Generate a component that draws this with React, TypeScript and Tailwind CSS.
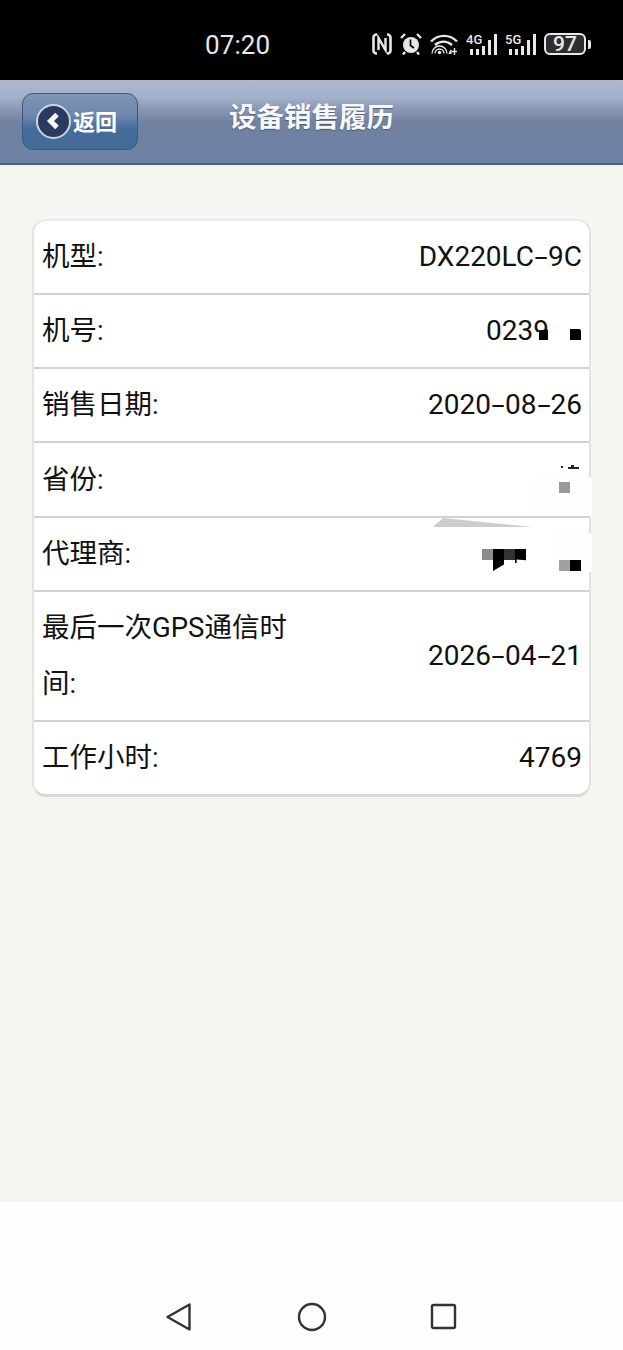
import React from 'react';

const rows = [
  { label: '机型:', value: 'DX220LC-9C', h: 'h-[72px]' },
  { label: '机号:', value: '0239', h: 'h-[72px]', cls: 'mr-[33px]' },
  { label: '销售日期:', value: '2020-08-26', h: 'h-[72px]' },
  { label: '省份:', value: '', h: 'h-[73px]' },
  { label: '代理商:', value: '', h: 'h-[72px]' },
  { label: '最后一次GPS通信时间:', value: '2026-04-21', h: 'h-[128px]', wrap: true },
  { label: '工作小时:', value: '4769', h: 'h-[72px]', last: true },
];

// the hyphens on the phone's font are much wider than Roboto's
const Value = ({ text }: { text: string }) => (
  <>
    {text.split(/(-)/).map((part, i) =>
      part === '-' ? (
        <span key={i} className="inline-block w-[14px] text-center scale-x-[1.7]">-</span>
      ) : (
        <span key={i}>{part}</span>
      ),
    )}
  </>
);

const Signal = ({ tag }: { tag: string }) => (
  <div className="relative w-[31px] h-[22px]">
    <span className="absolute left-0 top-[-1px] text-[13px] leading-[15px] font-medium text-[#e8e8e8]">{tag}</span>
    <div className="absolute right-0 bottom-0 flex items-end gap-[3px]">
      <div className="w-[3px] h-[6px] bg-[#e8e8e8]" />
      <div className="w-[3px] h-[6px] bg-[#e8e8e8]" />
      <div className="w-[3px] h-[9px] bg-[#e8e8e8]" />
      <div className="w-[3px] h-[15px] bg-[#e8e8e8]" />
      <div className="w-[3px] h-[21px] bg-[#e8e8e8]" />
    </div>
  </div>
);

const StatusBar = () => (
  <div className="h-[80px] bg-black flex items-center relative font-['Roboto',sans-serif] text-[#e8e8e8]">
    <span className="ml-[205px] mt-[10px] text-[26px] leading-none tracking-[0.1px]">07:20</span>
    <div className="absolute left-[372px] top-[33px] flex items-center gap-[8px]">
      {/* nfc */}
      <svg width="20" height="22" viewBox="0 0 20 22">
        <path d="M5 1.500H4.500A3 3 0 0 0 1.500 4.500v13a3 3 0 0 0 3 3H5M15 1.500h.5a3 3 0 0 1 3 3v13a3 3 0 0 1-3 3H15" fill="none" stroke="#e8e8e8" strokeWidth="2.600" />
        <path d="M6.500 17V5l7 12V5" fill="none" stroke="#e8e8e8" strokeWidth="2.400" />
      </svg>
      {/* alarm */}
      <svg width="22" height="22" viewBox="0 0 22 22">
        <circle cx="11" cy="12" r="8" fill="#e8e8e8" />
        <path d="M10.500 6.500v6l3.500 2.500" fill="none" stroke="#000" strokeWidth="1.700" />
        <path d="M1 5l4-4M21 5l-4-4M5 19l-2 2.500M17 19l2 2.500" stroke="#e8e8e8" strokeWidth="2.400" />
      </svg>
      {/* wifi */}
      <svg width="28" height="22" viewBox="0 0 28 22">
        <path d="M1 8.500C8 1 20 1 27 8.500" fill="none" stroke="#e8e8e8" strokeWidth="2.400" />
        <path d="M5 12c5-4.500 12-4.500 17 0" fill="none" stroke="#e8e8e8" strokeWidth="2.400" />
        <path d="M2 20.500a7.500 7.500 0 0 1 15 0M5 20.500a4.500 4.500 0 0 1 9 0" fill="none" stroke="#e8e8e8" strokeWidth="1.300" />
        <circle cx="9.500" cy="19.500" r="1.700" fill="#e8e8e8" />
        <path d="M19 21l2-4v4M24.500 15v7M22 18.500h5" fill="none" stroke="#e8e8e8" strokeWidth="1.400" />
      </svg>
      <Signal tag="4G" />
      <Signal tag="5G" />
      <div className="flex items-center gap-[2px]">
        <div className="w-[42px] h-[22px] rounded-[6px] border-2 border-[#e8e8e8] bg-[#2e2e2e] flex items-center justify-center text-[21px] font-medium leading-none">97</div>
        <div className="w-[3px] h-[9px] rounded-r-[2px] bg-[#e8e8e8]" />
      </div>
    </div>
  </div>
);

const Header = () => (
  <div className="h-[85px] bg-[linear-gradient(#b5b5ca_0px,#a8b5cd_8px,#a3b0c9_18px,#8b9ab7_28px,#71829f_42px,#6e81a6_100%)] border-b-2 border-[#4f5d7c] flex items-center relative">
    <div className="ml-[22px] mt-[-1px] w-[116px] h-[57px] rounded-[11px] border border-[#3c5880] bg-[linear-gradient(#7f95b8,#6c86ad_40%,#456c9b_62%,#466a98)] flex items-center pl-[13px]">
      <div className="w-[35px] h-[35px] rounded-full border-2 border-[#cdd5df] bg-[#2c3a61] flex items-center justify-center">
        <svg width="16" height="18" viewBox="0 0 16 18">
          <path d="M11 2.500L4.500 9l6.500 6.500" fill="none" stroke="#f4f6f8" strokeWidth="5" />
        </svg>
      </div>
      <span className="ml-[2px] mb-[3px] text-[22px] font-bold text-white leading-none font-['Noto_Sans_CJK_SC',sans-serif]">返回</span>
    </div>
    <h1 className="absolute left-[229px] top-[17px] text-[27.500px] leading-[36px] font-bold text-[#f6f7f8] font-['Noto_Sans_CJK_SC',sans-serif] [text-shadow:0_1px_1px_rgba(50,60,90,0.6)]">设备销售履历</h1>
  </div>
);

const Card = () => (
  <div className="relative mx-[32px] mt-[54px] rounded-[14px] border-x-2 border-t-2 border-b-[3px] border-x-[#e3e3df] border-t-[#ebebe7] border-b-[#d8d8d5] bg-white font-['Roboto','Noto_Sans_CJK_SC',sans-serif] text-[28px] text-[#111]">
    {rows.map((r) => (
      <div key={r.label} className={`flex items-center justify-between pl-[8px] pr-[7px] ${r.h} ${r.last ? '' : 'border-b-2 border-[#d2d2d2]'} box-content`}>
        <span className={`text-[27.500px] ${r.wrap ? 'w-[250px] leading-[56px]' : 'leading-[40px]'}`}>{r.label}</span>
        <span className={`leading-[40px] ${r.cls ?? ''}`}><Value text={r.value} /></span>
      </div>
    ))}
    {/* pixelated privacy marks over the values */}
    <div className="absolute left-[499px] top-[111px] w-[6px] h-[13px] bg-white" />
    <div className="absolute left-[505px] top-[109px] w-[9px] h-[10px] bg-black" />
    <div className="absolute left-[536px] top-[108px] w-[11px] h-[11px] bg-black rounded-tr-[2px]" />
    <div className="absolute left-[500px] top-[257px] w-[58px] h-[38px] bg-[#fefefe]" />
    <div className="absolute left-[527px] top-[245px] w-[2px] h-[2px] bg-[#222]" />
    <div className="absolute left-[534px] top-[246px] w-[11px] h-[2px] bg-[#222]" />
    <div className="absolute left-[537px] top-[244px] w-[3px] h-[3px] bg-[#222]" />
    <div className="absolute left-[525px] top-[261px] w-[11px] h-[11px] bg-[#9a9a9a]" />
    <svg className="absolute left-[399px] top-[296px]" width="100" height="10" viewBox="0 0 100 10">
      <polygon points="0,10 10,1 100,10" fill="#cdcdcd" />
    </svg>
    <div className="absolute left-[518px] top-[313px] w-[40px] h-[38px] bg-[#fefefe]" />
    <div className="absolute left-[448px] top-[328px] w-[11px] h-[11px] bg-[#8c8c8c]" />
    <div className="absolute left-[459px] top-[328px] w-[11px] h-[22px] bg-black [clip-path:polygon(0_0,100%_0,100%_70%,0_100%)]" />
    <div className="absolute left-[470px] top-[328px] w-[11px] h-[11px] bg-[#333]" />
    <div className="absolute left-[481px] top-[328px] w-[11px] h-[14px] bg-black [clip-path:polygon(0_0,100%_0,100%_80%,15%_75%,15%_100%,0_100%)]" />
    <div className="absolute left-[525px] top-[339px] w-[11px] h-[11px] bg-[#a0a0a0]" />
    <div className="absolute left-[536px] top-[339px] w-[11px] h-[11px] bg-black" />
  </div>
);

const NavBar = () => (
  <div className="h-[148px] bg-[linear-gradient(#fefefe_54%,#fdfdfd_56%)] flex items-start justify-center gap-[103px] pt-[100px]">
    <svg width="28" height="30" viewBox="0 0 28 30">
      <path d="M23.500 2.500L1.500 15l22 12.500z" fill="none" stroke="#333" strokeWidth="2.400" strokeLinejoin="round" />
    </svg>
    <svg width="30" height="30" viewBox="0 0 30 30">
      <circle cx="15" cy="15" r="13" fill="none" stroke="#333" strokeWidth="2.400" />
    </svg>
    <svg width="28" height="30" viewBox="0 0 28 30">
      <rect x="2" y="3" width="23" height="23" rx="1.500" fill="none" stroke="#333" strokeWidth="2.400" />
    </svg>
  </div>
);

export default function App() {
  return (
    <div className="w-[623px] h-[1350px] flex flex-col bg-[#f5f5f1] overflow-hidden">
      <StatusBar />
      <Header />
      <div className="flex-1">
        <Card />
      </div>
      <NavBar />
    </div>
  );
}
